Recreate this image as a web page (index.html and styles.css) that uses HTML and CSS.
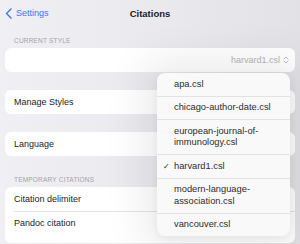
FILE: index.html
```html
<!DOCTYPE html>
<html lang="en">
    <head>
        <meta charset="UTF-8">
        <title>Citations</title>
        <link rel="stylesheet" href="styles.css">
    </head>
    <body>
        <div class="nav">
            <a class="back" href="#">
                <svg class="chevron" width="7" height="11" viewBox="0 0 7 11"><path d="M6 1 L1.5 5.5 L6 10" fill="none" stroke="#3478f6" stroke-width="1.4" stroke-linecap="round" stroke-linejoin="round"/></svg>
                Settings
            </a>
            <div class="title">Citations</div>
        </div>

        <div class="section-header">CURRENT STYLE</div>
        <div class="card">
            <div class="row picker">
                <span class="value">harvard1.csl</span>
                <svg class="updown" width="6" height="8" viewBox="0 0 6 8"><path d="M1 3 L3 1 L5 3 M1 5 L3 7 L5 5" fill="none" stroke="#b4b4b9" stroke-width="0.9" stroke-linecap="round" stroke-linejoin="round"/></svg>
            </div>
        </div>

        <div class="card spaced">
            <div class="row">Manage Styles</div>
        </div>

        <div class="card spaced">
            <div class="row">Language</div>
        </div>

        <div class="section-header second">TEMPORARY CITATIONS</div>
        <div class="card last">
            <div class="row">Citation delimiter</div>
            <div class="row">Pandoc citation</div>
        </div>

        <!-- style picker menu, open over the list -->
        <div class="menu">
            <div class="item">apa.csl</div>
            <div class="item">chicago-author-date.csl</div>
            <div class="item">european-journal-of-<br>immunology.csl</div>
            <div class="item checked"><span class="check">&#10003;</span>harvard1.csl</div>
            <div class="item">modern-language-<br>association.csl</div>
            <div class="item">vancouver.csl</div>
        </div>
    </body>
</html>
```

FILE: styles.css
```css
body {
    font-family: 'Liberation Sans', Arial, sans-serif;
    font-size: 9px;
    color: #1c1c1e;
    margin: 0;
    padding: 0 5px;
    background: linear-gradient(90deg, #efeff4 0%, #e9e9ed 60%, #e2e2e6 100%);
    height: 244px;
    overflow: hidden;
    position: relative;
}
.nav {
    height: 26px;
    display: flex;
    align-items: center;
    position: relative;
}
.back {
    display: flex;
    align-items: center;
    gap: 4px;
    color: #3478f6;
    text-decoration: none;
    font-size: 9px;
}
.title {
    position: absolute;
    left: 0;
    right: 0;
    text-align: center;
    font-weight: bold;
    font-size: 9.5px;
    pointer-events: none;
}
.section-header {
    font-size: 6.5px;
    color: #a3a3a8;
    letter-spacing: 0.2px;
    padding-left: 9px;
    margin-top: 10px;
    line-height: 9px;
    margin-bottom: 3px;
}
.section-header.second {
    margin-top: 19px;
}
.card {
    background: #fff;
    border-radius: 6px;
    overflow: hidden;
}
.card.spaced {
    margin-top: 18px;
}
.card.last {
    padding-bottom: 8px;
}
.row {
    height: 24px;
    display: flex;
    align-items: center;
    padding: 0 9px;
    position: relative;
}
.row + .row::before {
    content: "";
    position: absolute;
    top: 0;
    left: 9px;
    right: 0;
    border-top: 1px solid #e4e4e8;
}
.picker {
    justify-content: flex-end;
    gap: 3px;
    padding-right: 6px;
}
.value {
    color: #b4b4b9;
}
.menu {
    position: absolute;
    left: 157px;
    top: 73px;
    width: 133px;
    background: #f9f9fa;
    border-radius: 8px;
    box-shadow: 0 0 40px 14px rgba(0, 0, 0, 0.08), 0 2px 8px rgba(0, 0, 0, 0.06);
    overflow: hidden;
    font-size: 9.3px;
}
.item {
    padding: 5.5px 8px 5.5px 17px;
    line-height: 11.5px;
    border-top: 1px solid #e3e3e7;
    color: #2c2c2e;
    position: relative;
}
.item:first-child {
    border-top: none;
}
.check {
    position: absolute;
    left: 6px;
    font-size: 8px;
}
```
